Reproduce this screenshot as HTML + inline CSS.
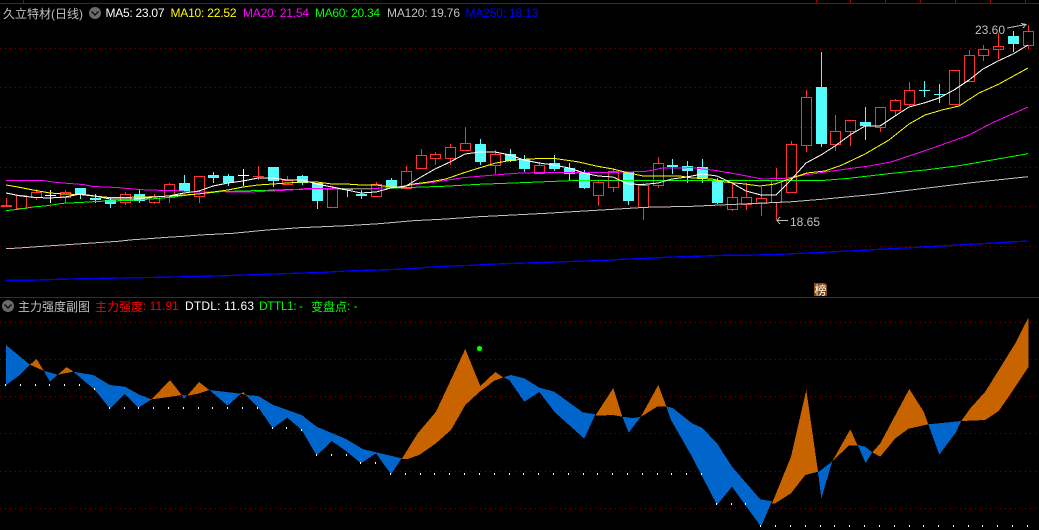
<!DOCTYPE html>
<html><head><meta charset="utf-8"><style>
html,body{margin:0;padding:0;background:#000;width:1039px;height:530px;overflow:hidden}
svg{display:block;position:absolute;left:0;top:0}
text{font-family:"Liberation Sans","Noto Sans CJK SC",sans-serif;font-size:12px;white-space:pre}
</style></head><body>
<svg width="1039" height="530" viewBox="0 0 1039 530" xmlns="http://www.w3.org/2000/svg">
<rect width="1039" height="530" fill="#000"/>
<g shape-rendering="crispEdges" fill="none">
<path stroke="#a00000" d="M0 3.5H1039M0 297.5H1039M23.5 0V3M816.5 0V3M850.5 0V3M885.5 0V3M920.5 0V3M955.5 0V3M990.5 0V3M1025.5 0V3"/>
<path stroke="#8c0000" stroke-dasharray="1 4" d="M0 48.5H1039M0 87.5H1039M0 127.5H1039M0 167.5H1039M0 206.5H1039M0 246.5H1039M0 322.5H1039M0 359.5H1039M0 396.5H1039M0 433.5H1039M0 471.5H1039M0 508.5H1039"/>

<!-- red candles -->
<path stroke="#ff3232" d="M6.5 198V207M1 205.5h11M1 206.5h11
M16.5 195.5h10v13h-10z
M36.5 189V192M36.5 197V200M31.5 192.5h10v5h-10z
M65.5 190V192M65.5 197V203M60.5 192.5h10v5h-10z
M125.5 192V194M125.5 203V205M120.5 194.5h10v8h-10z
M154.5 194V196M154.5 202V204M149.5 196.5h10v6h-10z
M169.5 183V184M169.5 197V203M164.5 184.5h10v13h-10z
M199.5 197V203M194.5 176.5h10v20h-10z
M258.5 166V180M253 176.5h11
M287.5 176V180M282.5 180.5h10v4h-10z
M332.5 186V188M327.5 188.5h10v19h-10z
M376.5 182V184M371.5 184.5h10v12h-10z
M406.5 166V171M406.5 188V189M401.5 171.5h10v17h-10z
M421.5 149V155M421.5 168V169M416.5 155.5h10v13h-10z
M435.5 152V154M435.5 158V165M430.5 154.5h10v4h-10z
M450.5 144V147M450.5 158V165M445.5 147.5h10v11h-10z
M465.5 127V143M465.5 150V151M460.5 143.5h10v7h-10z
M495.5 150V154M495.5 165V174M490.5 154.5h10v11h-10z
M539.5 162V165M539.5 173V174M534.5 165.5h10v8h-10z
M598.5 181V182M598.5 195V206M593.5 182.5h10v13h-10z
M613.5 168V171M613.5 187V192M608.5 171.5h10v16h-10z
M643.5 183V185M643.5 207V220M638.5 185.5h10v22h-10z
M658.5 157V163M658.5 185V188M653.5 163.5h10v22h-10z
M732.5 183V197M732.5 209V211M727.5 197.5h10v12h-10z
M746.5 183V197M746.5 204V210M741.5 197.5h10v7h-10z
M761.5 187V198M761.5 203V216M756.5 198.5h10v5h-10z
M776.5 168V180M776.5 202V220M771.5 180.5h10v22h-10z
M791.5 141V144M786.5 144.5h10v48h-10z
M806.5 90V97M806.5 145V152M801.5 97.5h10v48h-10z
M835.5 115V131M835.5 144V151M830.5 131.5h10v13h-10z
M850.5 131V146M845.5 120.5h10v11h-10z
M880.5 127V132M875.5 107.5h10v20h-10z
M895.5 99V100M895.5 110V115M890.5 100.5h10v10h-10z
M909.5 82V90M909.5 104V106M904.5 90.5h10v14h-10z
M949.5 70.5h10v34h-10z
M969.5 50V55M969.5 81V82M964.5 55.5h10v26h-10z
M983.5 45V49M983.5 55V61M978.5 49.5h10v6h-10z
M998.5 33V46M998.5 49V59M993.5 46.5h10v3h-10z
M1028.5 25V31M1028.5 45V49M1023.5 31.5h10v14h-10z"/>

<!-- cyan wicks -->
<path stroke="#54fcfc" d="M80.5 188V199M95.5 194V203M110.5 197V208M139.5 190V203M184.5 175V192M213.5 172V183M228.5 174V186M273.5 167V187M302.5 175V185M317.5 183V209M347.5 188V197M361.5 190V199M391.5 178V187M480.5 139V165M510.5 149V162M524.5 155V172M554.5 155V171M569.5 163V180M584.5 170V189M628.5 172V205M672.5 159V174M687.5 161V183M702.5 159V183M717.5 178V204M821.5 52V147M865.5 107V140M924.5 81V97M919 90.5h11M939.5 84V103M934 94.5h11M1013.5 31V52"/>
<!-- cyan bodies -->
<path fill="#54fcfc" d="M75 188h11v7h-11zM90 198h11v2h-11zM105 200h11v4h-11zM134 194h11v7h-11zM179 183h11v8h-11zM208 175h11v3h-11zM223 176h11v7h-11zM268 167h11v14h-11zM297 176h11v7h-11zM312 183h11v18h-11zM342 188h11v2h-11zM356 194h11v2h-11zM386 180h11v7h-11zM475 144h11v18h-11zM505 154h11v7h-11zM519 159h11v10h-11zM549 163h11v6h-11zM564 168h11v6h-11zM579 173h11v15h-11zM623 172h11v29h-11zM667 165h11v2h-11zM682 166h11v5h-11zM697 167h11v11h-11zM712 181h11v22h-11zM816 87h11v57h-11zM860 122h11v4h-11zM1008 36h11v8h-11z"/>
<!-- white crosses -->
<path stroke="#fff" d="M50.5 190V203M45 195.5h11M243.5 169V186M238 175.5h11"/>

<!-- MA lines -->
<polyline stroke="#0000ff" stroke-width="1.3" points="6,280.3 29,280.3 58,279.3 103,278.3 162,277.3 206,276.3 236,275.3 266,274.3 295,273.3 325,272.3 346,271 400,269.3 414,268.3 428,267.3 443,266.3 473,265.3 488,264.3 517,263.3 547,262.3 577,261.3 606,260.3 621,259.3 651,258.3 665,257.3 695,256.3 725,255.3 746,255.3 780,254.3 813,252.7 857,250.7 880,249.3 950,245.5 1028,241"/>
<polyline stroke="#c0c0c0" stroke-width="1" points="6,248.3 14,248.3 29,247.3 43,246.3 58,245.3 73,244.3 88,243.3 103,242.3 118,241.3 132,239.8 147,238.8 167,237.3 184,236.3 200,235 233,233.3 267,230 300,227.7 346,225.7 379,223.7 413,220.7 446,219 479,216.7 513,215 546,213.3 579,211.3 613,209.3 646,207.3 692,206.3 792,201.7 825,199 875,194.3 925,188.3 975,182.3 1028,176.7"/>
<polyline stroke="#00ff00" stroke-width="1" points="6,210.7 20,209 33,207 47,205.7 63,203.3 83,202.3 100,201.3 133,200.3 160,198.3 180,196 197,194 220,191.7 253,190.7 300,189.3 346,188.7 396,188 443,186.3 479,184.3 513,183 546,181.7 579,180.3 692,180.3 825,180.3 849,178.3 892,173.3 925,170 959,165.7 992,160 1028,153.7"/>
<polyline stroke="#ff00ff" stroke-width="1" points="6,180.5 43,180.5 53,182 63,183 83,184.5 93,186.5 117,187.5 133,189 147,190 177,190.7 193,192 220,191.7 250,192 290,190 310,188.3 346,189 369,189 399,186.7 419,184 436,182 463,177.7 486,175.7 516,173.3 546,172.3 606,172.7 646,171.3 663,168 692,167.7 712,170 729,172.7 745,175.7 762,179 785,178.3 805,175 839,170 869,166 892,161.7 912,155 932,148.3 969,135 992,123 1028,107"/>
<polyline stroke="#ffff00" stroke-width="1" points="6,185 18,187 33,190 50,193 63,194 80,194.5 93,196 110,197.5 125,197.5 139,197 154,197 169,196 184,195 199,194 213,192 228,190 243,187 258,185 273,184 287,183 302,182 317,182 332,184 346,184 361,185 376,185 391,187 403,187 413,184 429,182 446,179 463,173 479,168 496,163 513,160 536,158.7 556,158.7 579,162 596,166 613,169 629,173 643,176 680,176 692,178 712,179 725,182 745,184 760,186 775,184 795,177 807,173 825,171 842,165 865,154 889,140 909,124 925,115 942,110 959,106 979,93 999,84 1028,68"/>
<polyline stroke="#ffffff" stroke-width="1" points="6,193 21,196 36,197.5 50,198 65,197 80,194 95,196 110,199 125,199 139,199 154,197 169,196 184,193 199,191 213,186 228,183 243,181 258,178 273,178 287,180 302,180 317,184 332,187 347,190 361,193 376,192 391,188 406,186 421,177 435,169 450,162 465,154 480,152 495,152 510,155 524,160 539,163 554,165 569,168 584,173 598,176 613,177 628,184 643,184.5 658,183 672,179 687,177 702,174 717,176 732,183 746,191 761,195 776,195 791,180 806,163 821,155 835,146 850,135 865,126 880,126 895,116 909,107 924,103 939,98 954,90 969,80 983,69 998,61 1013,54 1028,45"/>

<!-- sub-chart ribbons: blue -->
<g fill="#0066cc">
<polygon points="6,345 30,364.7 20,375 6,385"/>
<polygon points="43.7,370.7 57.7,374.7 50,381.7"/>
<polygon points="73.3,371.7 93.3,375 110,385 125,386.7 140,395 151.7,399.3 138.3,407.7 125,394 110,408.7 95,390"/>
<polygon points="181.7,395 187.3,395.7 184,399"/>
<polygon points="209.3,390 241,393.7 227.7,405.7"/>
<polygon points="245.7,395 258.3,396 273.3,405 301.7,415 316.7,426.7 346,439 362.7,449 376,452.3 401.7,458.3 391,474.3 376,453.3 361,463.3 346,451 331.7,441 316.7,455.7 301.7,430 287.3,417.7 272.7,428.3 258.3,407.3"/>
<polygon points="503.3,377.3 511,375 524.3,378.3 539.3,387.7 554.3,391.7 582.7,412.3 595.3,414.3 584.3,438.7 554.3,411.7 539.3,392 524.3,401.7 509.3,380"/>
<polygon points="622.3,416.7 632.7,418 640.7,417 628.7,432.7"/>
<polygon points="666.3,406.3 672.7,408 692,423.3 702,427.7 717,443.3 732,466.7 760.3,499.3 772,501.3 761,526.7 732,486.7 717,505 692,456.7 671,420"/>
<polygon points="818,472.3 832.3,461.3 821.3,498.3"/>
<polygon points="857.7,445 865.3,446.7 872.3,452.3 865.7,463.3"/>
<polygon points="928.3,424.3 961.3,421 955.3,433.3 939.3,454.7"/>
</g>
<!-- orange -->
<g fill="#c86400">
<polygon points="30,364.7 36.7,359 43.7,370.7 36.7,367.7"/>
<polygon points="57.7,374.7 66.7,367 73.3,371.7 65,373.3"/>
<polygon points="151.7,399.3 170,380 181.7,395 166.7,397.3"/>
<polygon points="187.3,395.7 199,382 209.3,390 198.3,393.7"/>
<polygon points="241,393.7 243.3,392 245.7,395"/>
<polygon points="401.7,459 417.7,433.3 436,411.7 465.3,349 480.3,386 495.3,372 503.3,377.3 494.3,380.7 479.3,392 465.3,405 451,430 436,443.3 419.3,455 407.7,459"/>
<polygon points="595.3,415.7 613.3,388 622.3,416.7 612.7,415"/>
<polygon points="640.7,417 658.3,385 666.3,406.3 657.7,406.3"/>
<polygon points="772,503.3 791,456.7 806.3,390 818,471.7 805.3,475 791,493.3 775.3,503.3"/>
<polygon points="832.3,461.3 850.3,429.3 857.7,445.7 848.7,445.7"/>
<polygon points="872.3,452.3 880.3,443.3 909.3,389 923.7,411.7 928.3,424.3 908.7,428.7 895.3,438.3 880.3,456.7"/>
<polygon points="961.3,421 970.3,408.3 985.3,391.7 1015.3,343.3 1028.7,317 1028.7,366.7 1008.7,396.7 998.7,411 985.3,420 968.7,420.7"/>
</g>
<!-- white dots -->
<path fill="#fff" d="M5 384h1v2h-1zM20 384h1v2h-1zM35 384h1v2h-1zM49 384h1v2h-1zM64 384h1v2h-1zM79 384h1v2h-1zM94 388h1v2h-1zM109 407h1v2h-1zM124 407h1v2h-1zM138 407h1v2h-1zM153 407h1v2h-1zM168 407h1v2h-1zM183 407h1v2h-1zM198 407h1v2h-1zM212 407h1v2h-1zM227 407h1v2h-1zM242 407h1v2h-1zM257 407h1v2h-1zM272 427h1v2h-1zM286 427h1v2h-1zM301 429h1v2h-1zM316 454h1v2h-1zM331 454h1v2h-1zM346 454h1v2h-1zM360 462h1v2h-1zM375 462h1v2h-1zM390 473h1v2h-1zM405 473h1v2h-1zM420 473h1v2h-1zM434 473h1v2h-1zM449 473h1v2h-1zM464 473h1v2h-1zM479 473h1v2h-1zM494 473h1v2h-1zM509 473h1v2h-1zM523 473h1v2h-1zM538 473h1v2h-1zM553 473h1v2h-1zM568 473h1v2h-1zM583 473h1v2h-1zM597 473h1v2h-1zM612 473h1v2h-1zM627 473h1v2h-1zM642 473h1v2h-1zM657 473h1v2h-1zM671 473h1v2h-1zM686 473h1v2h-1zM701 473h1v2h-1zM716 503h1v2h-1zM731 503h1v2h-1zM745 503h1v2h-1zM760 525h1v2h-1zM775 525h1v2h-1zM790 525h1v2h-1zM805 525h1v2h-1zM820 525h1v2h-1zM834 525h1v2h-1zM849 525h1v2h-1zM864 525h1v2h-1zM879 525h1v2h-1zM894 525h1v2h-1zM909 525h1v2h-1zM923 525h1v2h-1zM938 525h1v2h-1zM953 525h1v2h-1zM968 525h1v2h-1zM982 525h1v2h-1zM997 525h1v2h-1zM1012 525h1v2h-1zM1027 525h1v2h-1z"/>
<!-- arrows -->
<path stroke="#c0c0c0" d="M1007 28L1026 24.5M1021 23.5L1026 24.5L1023 28M777 220.5H788M777 220.5L780 217M777 220.5L780 224"/>
</g>
<circle cx="479.5" cy="348.5" r="2.6" fill="#00ff00"/>

<!-- header icons -->
<circle cx="95" cy="13" r="6" fill="#6a6a6a"/>
<path d="M91.5 11.5L95 15L98.5 11.5" fill="none" stroke="#111" stroke-width="1.5"/>
<circle cx="8" cy="306" r="6" fill="#6a6a6a"/>
<path d="M4.5 304.5L8 308L11.5 304.5" fill="none" stroke="#111" stroke-width="1.5"/>

<!-- header text -->
<text x="3" y="18" fill="#c0c0c0">久立特材(日线)</text>
<text x="105.5" y="17" fill="#ffffff" textLength="59">MA5: 23.07</text>
<text x="170.5" y="17" fill="#ffff00" textLength="66">MA10: 22.52</text>
<text x="243" y="17" fill="#ff00ff" textLength="66">MA20: 21.54</text>
<text x="315" y="17" fill="#00ff00" textLength="65">MA60: 20.34</text>
<text x="387" y="17" fill="#c0c0c0" textLength="73">MA120: 19.76</text>
<text x="465.5" y="17" fill="#0000ff" textLength="73">MA250: 18.13</text>

<text x="18" y="311" fill="#c0c0c0">主力强度副图</text>
<text x="95" y="311" fill="#ff0000">主力强度<tspan x="143" y="310">: 11.91</tspan></text>
<text x="185" y="310" fill="#ffffff" textLength="69">DTDL: 11.63</text>
<text x="259" y="310" fill="#00ff00" textLength="44">DTTL1: -</text>
<text x="311" y="311" fill="#00ff00">变盘点<tspan x="347" y="310">: -</tspan></text>

<text x="975" y="34" fill="#c0c0c0" textLength="30">23.60</text>
<text x="790" y="226" fill="#c0c0c0" textLength="30">18.65</text>

<!-- badge -->
<path d="M814 283h11l2 2v11h-13z" fill="#8b4a0b"/>
<text x="814.5" y="294.5" fill="#ffffff">榜</text>
</svg>
</body></html>
